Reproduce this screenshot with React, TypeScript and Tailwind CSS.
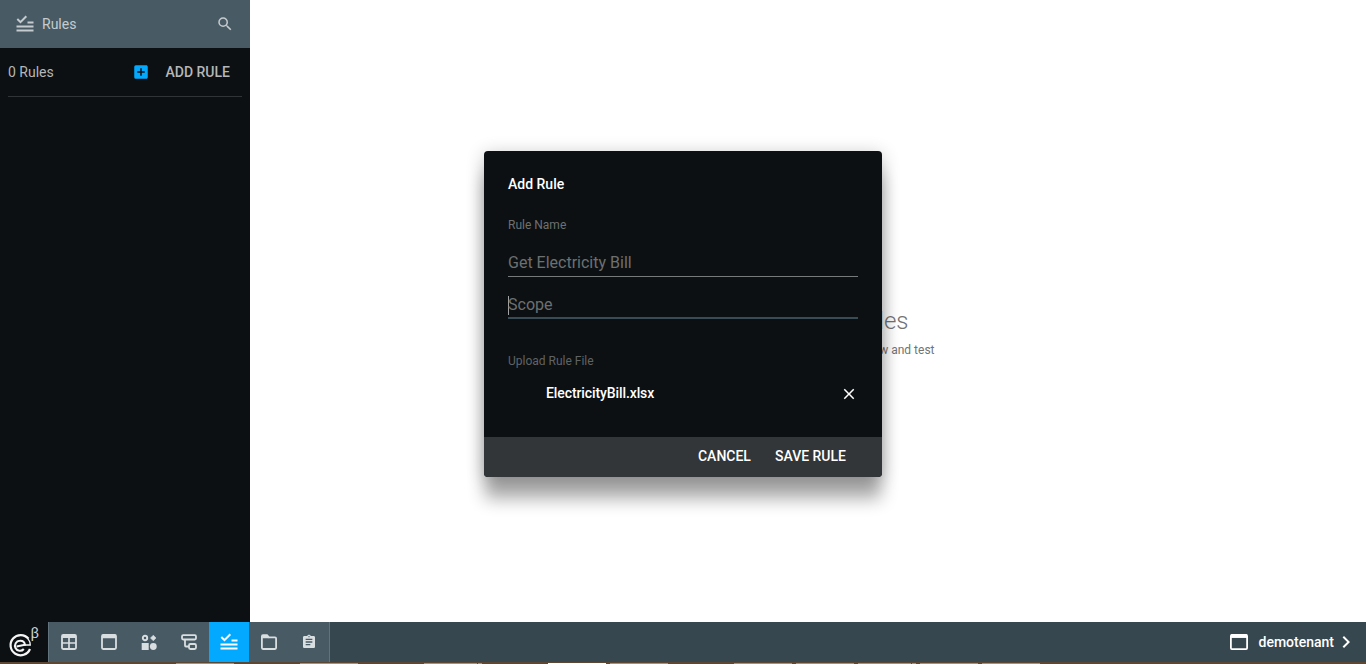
import React from "react";
import { MdSearch, MdAddBox, MdClose, MdAssignment, MdChevronRight } from "react-icons/md";

const taskbar: [number, number, string][] = [
  [176, 58, "#9c9484"], [300, 58, "#9c9484"], [424, 53, "#9c9484"], [478, 4, "#9c9484"],
  [548, 58, "#ffffff"], [610, 58, "#9c9484"], [734, 58, "#9c9484"], [796, 58, "#9c9484"],
  [858, 53, "#9c9484"], [912, 4, "#9c9484"], [920, 58, "#9c9484"], [982, 58, "#9c9484"],
];

function RulesIcon() {
  return (
    <svg width="18" height="18" viewBox="0 0 18 18" fill="none" stroke="currentColor" strokeWidth="2">
      <path d="M1.300 4 4.500 7.200 10.300 1.300M11.500 7.500H17.500M.5 11.500H17.500M.5 15.500H17.500" />
    </svg>
  );
}

function GridIcon() {
  return (
    <svg width="16" height="16" viewBox="0 0 16 16" fill="none" stroke="currentColor">
      <rect x="1" y="1" width="14" height="14" rx="1.200" strokeWidth="1.800" />
      <path d="M1 2.500H15" strokeWidth="3" />
      <path d="M8 4V15M1 9H15" strokeWidth="1.700" />
    </svg>
  );
}

function WindowIcon() {
  return (
    <svg width="16" height="16" viewBox="0 0 16 16" fill="none" stroke="currentColor">
      <rect x="1" y="1" width="14" height="14" rx="1.200" strokeWidth="1.800" />
      <path d="M1 2.500H15" strokeWidth="3.500" />
    </svg>
  );
}

function ShapesIcon() {
  return (
    <svg width="16" height="16" viewBox="0 0 16 16" fill="currentColor">
      <circle cx="4" cy="4" r="2.200" fill="none" stroke="currentColor" strokeWidth="1.900" />
      <path d="M12.300 1.200 15 4 12.300 6.800 9.500 4Z" stroke="currentColor" strokeWidth=".6" strokeLinejoin="round" />
      <rect x=".7" y="9" width="7" height="7" />
      <circle cx="12.300" cy="12.500" r="3.400" />
    </svg>
  );
}

function FlowIcon() {
  return (
    <svg width="16" height="16" viewBox="0 0 16 16" fill="none" stroke="currentColor" strokeWidth="1.800">
      <rect x="1" y="1.200" width="14" height="4.300" rx="1.200" />
      <path d="M4 5.500V11.500Q4 12.500 5 12.500H8" />
      <rect x="8" y="10" width="7" height="5" rx="1.400" />
    </svg>
  );
}

function FolderIcon() {
  return (
    <svg width="16" height="16" viewBox="0 0 16 16" fill="none" stroke="currentColor" strokeWidth="1.800">
      <path d="M2 1.200H6L8 3.400H14Q15.100 3.400 15.100 4.600V13.800Q15.100 15 14 15H2Q.9 15 .9 13.800V2.400Q.9 1.200 2 1.200Z" />
      <path d="M1.200 1.200H6.200L8.200 4.200H1.200Z" fill="currentColor" stroke="none" />
    </svg>
  );
}

function Logo() {
  return (
    <svg width="34" height="34" viewBox="0 0 34 34" fill="none" stroke="#f5f5f5" className="mt-1 ml-2 overflow-visible">
      <path d="M20.500 12.800A10.100 10.100 0 1 0 22 23" strokeWidth="2.200" />
      <path d="M8.600 20.400 17 18.800C16.500 15.900 14.200 14.600 11.800 14.800A5 5 0 1 0 15.800 23" strokeWidth="2" />
      <path d="M16 19H22.300Q22.300 15.500 20 12.800" strokeWidth="1.300" />
      <text x="22.500" y="12" fill="#d0d2d3" stroke="none" fontSize="14.500" className="font-['Roboto']">β</text>
    </svg>
  );
}

function Sidebar() {
  return (
    <aside className="flex w-[250px] shrink-0 flex-col bg-[#0c1013] text-[#b5b7b8]">
      <header className="flex h-12 items-center bg-[#485b65] pr-4 pl-4 text-[#c5cbce]">
        <RulesIcon />
        <span className="ml-2 flex-1 text-sm">Rules</span>
        <MdSearch className="size-[18px]" />
      </header>
      <div className="mx-2 flex h-[49px] items-center border-b border-[#303437] text-sm">
        <span className="flex-1">0 Rules</span>
        <MdAddBox className="mr-4 size-[18px] text-[#03a9ff]" />
        <span className="mr-3 font-medium">ADD RULE</span>
      </div>
    </aside>
  );
}

function Dialog() {
  return (
    <section className="absolute top-[151px] left-[484px] flex h-[326px] w-[398px] flex-col rounded bg-[#0c1013] text-white shadow-[0_23px_17px_-1px_rgba(0,0,0,0.32),0_3px_18px_rgba(0,0,0,0.24)]">
      <div className="flex flex-1 flex-col px-6 pt-[23px]">
        <h2 className="text-sm leading-5 font-medium">Add Rule</h2>
        <label className="mt-[23px] text-xs leading-4 text-[#6d7071]">Rule Name</label>
        <div className="mt-[18px] flex h-[26px] items-start border-b border-[#777a7b] text-base leading-6 text-[#6d7071]">Get Electricity Bill</div>
        <div className="mt-4 flex h-[26px] items-start border-b-2 border-[#394b54] text-base leading-6 text-[#6d7071]">
          <span className="mt-[3px] -mr-px h-[19px] w-px bg-[#a0a2a3]" />
          <span>Scope</span>
        </div>
        <label className="mt-[34px] text-xs leading-4 text-[#606364]">Upload Rule File</label>
        <div className="mt-[14px] flex h-5 items-center justify-between pl-[38px] text-sm font-medium">
          <span className="tracking-[-0.1px]">ElectricityBill.xlsx</span>
          <MdClose className="mt-[2px] size-[18px]" />
        </div>
      </div>
      <footer className="flex h-10 items-center justify-end gap-6 rounded-b bg-[#333639] pr-9 pb-[2px] text-sm font-medium">
        <button>CANCEL</button>
        <button>SAVE RULE</button>
      </footer>
    </section>
  );
}

export default function App() {
  return (
    <div className="relative flex h-[664px] w-[1366px] flex-col overflow-hidden bg-white font-['Roboto',sans-serif]">
      <div className="flex h-[622px]">
        <Sidebar />
        <main className="flex flex-1 flex-col items-center pt-[305px] text-[#737373]">
          <h1 className="w-[201px] text-right text-2xl leading-8 font-light">Rules</h1>
          <p className="mt-[5px] w-[253px] text-right text-xs leading-4">Add rules to view and test</p>
        </main>
      </div>
      <nav className="flex h-10 bg-[#37474f] text-[#d9dee1]">
        <div className="flex w-12 bg-[#0c1013]"><Logo /></div>
        <div className="flex border-x border-[#61737c] bg-[#485b65] [&>div]:flex [&>div]:w-10 [&>div]:items-center [&>div]:justify-center">
          <div><GridIcon /></div>
          <div><WindowIcon /></div>
          <div><ShapesIcon /></div>
          <div><FlowIcon /></div>
          <div className="bg-[#03a9ff] text-white"><RulesIcon /></div>
          <div><FolderIcon /></div>
          <div><MdAssignment className="size-4" /></div>
        </div>
        <div className="ml-auto flex items-center pr-2 text-white">
          <svg width="18" height="16" viewBox="0 0 18 16" fill="none" stroke="currentColor">
            <rect x=".9" y=".9" width="16.200" height="14.200" rx="1" strokeWidth="1.800" />
            <path d="M1 2.200H17" strokeWidth="3.500" />
          </svg>
          <span className="ml-[11px] text-sm font-medium">demotenant</span>
          <MdChevronRight className="size-6" />
        </div>
      </nav>
      <div className="relative h-0.5 bg-[#5c4734]">
        {taskbar.map(([x, w, c]) => (
          <span key={x} className="absolute top-px h-px" style={{ left: x, width: w, background: c }} />
        ))}
      </div>
      <Dialog />
    </div>
  );
}
